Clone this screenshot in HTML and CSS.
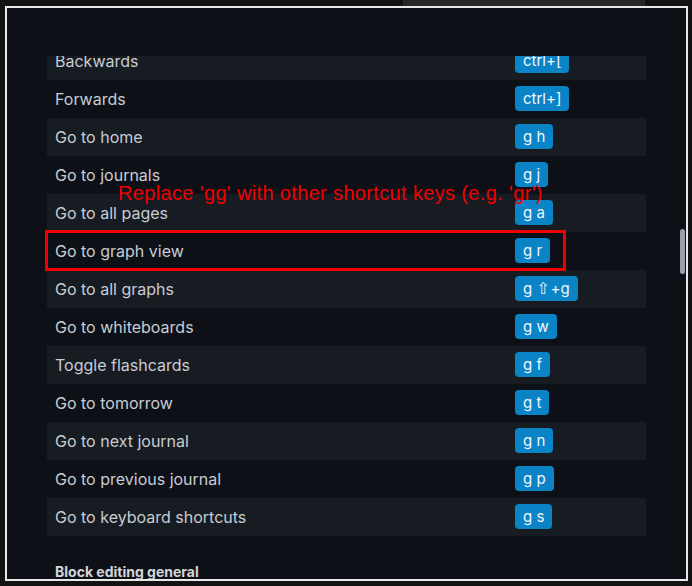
FILE: index.html
```html
<!DOCTYPE html>
<html>
<head>
<meta charset="utf-8">
<link rel="stylesheet" href="styles.css">
</head>
<body>
<div class="topstrip"><div class="topgrey"></div></div>
<div class="frame">
  <div class="header"></div>
  <div class="viewport">
    <div class="list">
      <div class="row alt"><span class="label">Backwards</span><span class="keys"><span class="key">ctrl+[</span></span></div>
      <div class="row"><span class="label">Forwards</span><span class="keys"><span class="key">ctrl+]</span></span></div>
      <div class="row alt"><span class="label">Go to home</span><span class="keys"><span class="key">g h</span></span></div>
      <div class="row"><span class="label">Go to journals</span><span class="keys"><span class="key">g j</span></span></div>
      <div class="row alt"><span class="label">Go to all pages</span><span class="keys"><span class="key">g a</span></span></div>
      <div class="row"><span class="label">Go to graph view</span><span class="keys"><span class="key">g r</span></span></div>
      <div class="row alt"><span class="label">Go to all graphs</span><span class="keys"><span class="key">g <span class="shift">⇧</span>+g</span></span></div>
      <div class="row"><span class="label">Go to whiteboards</span><span class="keys"><span class="key">g w</span></span></div>
      <div class="row alt"><span class="label">Toggle flashcards</span><span class="keys"><span class="key">g f</span></span></div>
      <div class="row"><span class="label">Go to tomorrow</span><span class="keys"><span class="key">g t</span></span></div>
      <div class="row alt"><span class="label">Go to next journal</span><span class="keys"><span class="key">g n</span></span></div>
      <div class="row"><span class="label">Go to previous journal</span><span class="keys"><span class="key">g p</span></span></div>
      <div class="row alt"><span class="label">Go to keyboard shortcuts</span><span class="keys"><span class="key">g s</span></span></div>
      <div class="section">Block editing general</div>
    </div>
  </div>
  <div class="scrollthumb"></div>
</div>
<div class="note">Replace 'gg' with other shortcut keys (e.g. 'gr')</div>
<div class="highlight"></div>
</body>
</html>
```
FILE: styles.css
```css
html, body {
  margin: 0;
  padding: 0;
  background: #131313;
  width: 692px;
  height: 586px;
  overflow: hidden;
  position: relative;
  font-family: Inter, "Noto Sans", sans-serif;
}
.topstrip {
  height: 6px;
  position: relative;
}
.topgrey {
  margin-left: 403px;
  width: 242px;
  height: 6px;
  background: #272727;
}
.frame {
  margin-left: 5px;
  width: 683px;
  height: 575px;
  box-sizing: border-box;
  border: 2px solid #e9e9e9;
  background: #0d1017;
  position: relative;
  overflow: hidden;
  display: flex;
  flex-direction: column;
}
.header {
  height: 48px;
  flex: none;
}
.viewport {
  flex: 1;
  overflow: hidden;
}
.list {
  margin-top: -14px;
  margin-left: 40px;
  width: 599px;
}
.row {
  height: 38px;
  display: grid;
  grid-template-columns: 468px 1fr;
  align-items: center;
}
.row.alt {
  background: #171b22;
}
.label {
  padding-left: 8px;
  font-size: 16px;
  color: #c8ccd3;
}
.keys {
  display: flex;
}
.key {
  display: inline-flex;
  align-items: center;
  height: 25px;
  padding: 0 8px;
  background: #0a83c7;
  color: #f4f7fa;
  border-radius: 4px;
  font-size: 15px;
  margin-top: -1px;
}
.shift {
  font-family: "DejaVu Sans", sans-serif;
  font-size: 16px;
  margin: 0 1px 0 4px;
}
.section {
  padding-top: 27px;
  padding-left: 8px;
  font-size: 14px;
  font-weight: 700;
  color: #d2d5da;
}
.scrollthumb {
  position: absolute;
  left: 673px;
  top: 221px;
  width: 5px;
  height: 45px;
  border-radius: 3px;
  background: #9aa1a9;
}
.note {
  position: absolute;
  left: 118px;
  top: 182px;
  font-family: "Liberation Sans", Arial, sans-serif;
  font-size: 20px;
  letter-spacing: 0.35px;
  color: #f00000;
  white-space: nowrap;
}
.highlight {
  position: absolute;
  left: 45px;
  top: 230px;
  width: 521px;
  height: 41px;
  box-sizing: border-box;
  border: 3px solid #f20000;
}
```
